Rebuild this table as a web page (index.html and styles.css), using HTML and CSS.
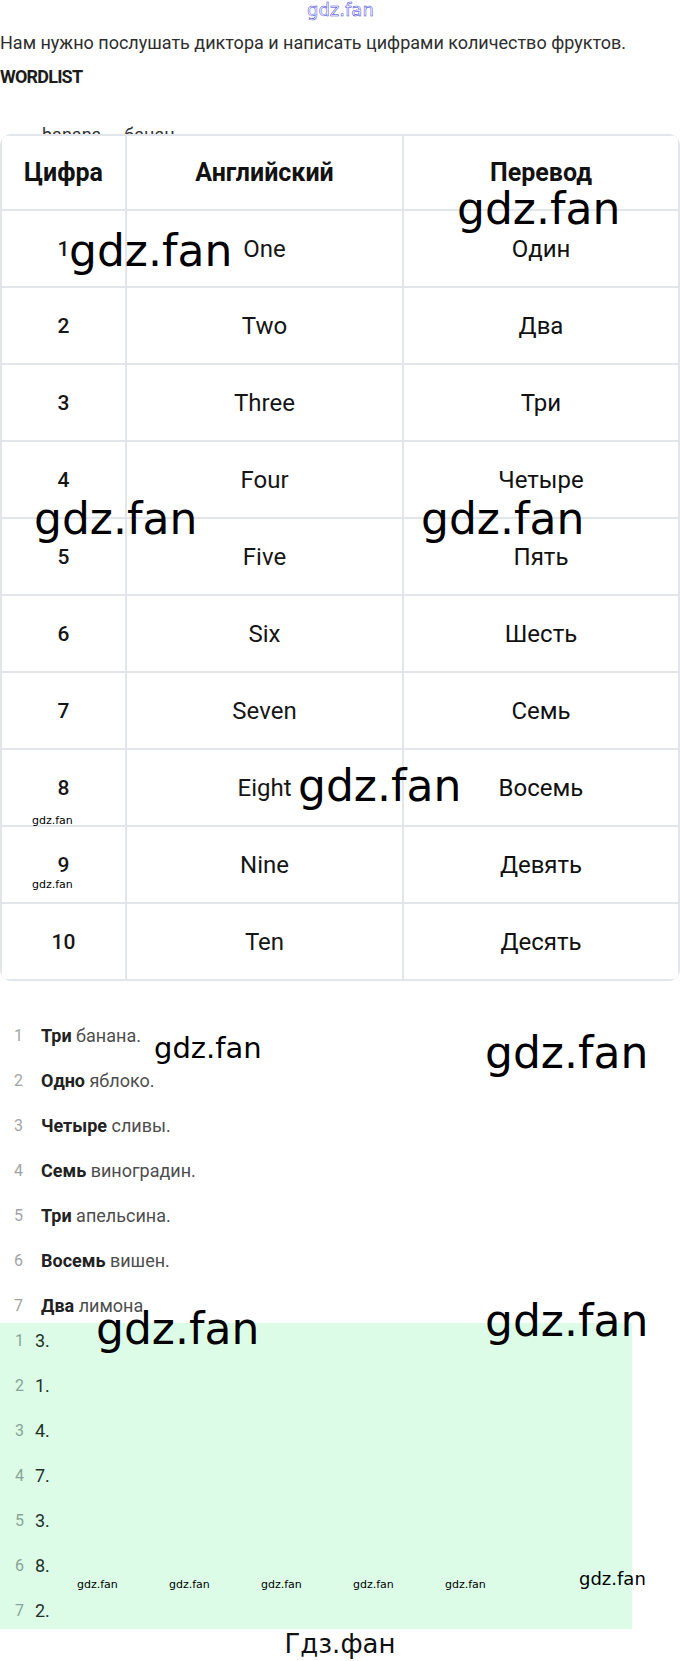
FILE: index.html
```html
<!DOCTYPE html>
<html lang="ru">
<head>
<meta charset="utf-8">
<title>WORDLIST</title>
<link rel="stylesheet" href="styles.css">
</head>
<body>
<div class="page">
  <p class="intro">Нам нужно послушать диктора и написать цифрами количество фруктов.</p>
  <h3 class="wordlist">WORDLIST</h3>
  <ul class="words"><li>banana — банан</li></ul>

  <div class="table">
    <div class="cell head">Цифра</div>
    <div class="cell head">Английский</div>
    <div class="cell head">Перевод</div>

    <div class="cell num">1</div><div class="cell en">One</div><div class="cell ru">Один</div>
    <div class="cell num">2</div><div class="cell en">Two</div><div class="cell ru">Два</div>
    <div class="cell num">3</div><div class="cell en">Three</div><div class="cell ru">Три</div>
    <div class="cell num">4</div><div class="cell en">Four</div><div class="cell ru">Четыре</div>
    <div class="cell num">5</div><div class="cell en">Five</div><div class="cell ru">Пять</div>
    <div class="cell num">6</div><div class="cell en">Six</div><div class="cell ru">Шесть</div>
    <div class="cell num">7</div><div class="cell en">Seven</div><div class="cell ru">Семь</div>
    <div class="cell num">8</div><div class="cell en">Eight</div><div class="cell ru">Восемь</div>
    <div class="cell num">9</div><div class="cell en">Nine</div><div class="cell ru">Девять</div>
    <div class="cell num">10</div><div class="cell en">Ten</div><div class="cell ru">Десять</div>
  </div>

  <ol class="sentences">
    <li><span class="n">1</span><span class="t"><b>Три</b> банана.</span></li>
    <li><span class="n">2</span><span class="t"><b>Одно</b> яблоко.</span></li>
    <li><span class="n">3</span><span class="t"><b>Четыре</b> сливы.</span></li>
    <li><span class="n">4</span><span class="t"><b>Семь</b> виноградин.</span></li>
    <li><span class="n">5</span><span class="t"><b>Три</b> апельсина.</span></li>
    <li><span class="n">6</span><span class="t"><b>Восемь</b> вишен.</span></li>
    <li><span class="n">7</span><span class="t"><b>Два</b> лимона.</span></li>
  </ol>

  <ol class="answers">
    <li><span class="n">1</span><span class="t">3.</span></li>
    <li><span class="n">2</span><span class="t">1.</span></li>
    <li><span class="n">3</span><span class="t">4.</span></li>
    <li><span class="n">4</span><span class="t">7.</span></li>
    <li><span class="n">5</span><span class="t">3.</span></li>
    <li><span class="n">6</span><span class="t">8.</span></li>
    <li><span class="n">7</span><span class="t">2.</span></li>
  </ol>

  <div class="footer-mark">Гдз.фан</div>

  <div class="wm wm-top">gdz.fan</div>
  <div class="wm big w1">gdz.fan</div>
  <div class="wm big w2">gdz.fan</div>
  <div class="wm big w3">gdz.fan</div>
  <div class="wm big w4">gdz.fan</div>
  <div class="wm big w5">gdz.fan</div>
  <div class="wm small s1">gdz.fan</div>
  <div class="wm small s2">gdz.fan</div>
  <div class="wm mid m1">gdz.fan</div>
  <div class="wm big w6">gdz.fan</div>
  <div class="wm big w7">gdz.fan</div>
  <div class="wm big w8">gdz.fan</div>
  <div class="wm small s3">gdz.fan</div>
  <div class="wm small s4">gdz.fan</div>
  <div class="wm small s5">gdz.fan</div>
  <div class="wm small s6">gdz.fan</div>
  <div class="wm small s7">gdz.fan</div>
  <div class="wm mid18 m2">gdz.fan</div>
</div>
</body>
</html>
```

FILE: styles.css
```css
* { box-sizing: border-box; }

html, body {
  margin: 0;
  padding: 0;
  background: #ffffff;
}

body {
  font-family: Roboto, "Noto Sans", sans-serif;
  color: #222;
}

.page {
  position: relative;
  width: 680px;
  padding-top: 30px;
}

.intro {
  margin: 0;
  font-size: 18px;
  line-height: 26px;
  color: #2e2e2e;
}

.wordlist {
  margin: 8px 0 0;
  font-size: 18px;
  line-height: 26px;
  font-weight: 700;
  letter-spacing: -0.8px;
  color: #1c1c1c;
}

.words {
  list-style: none;
  margin: 32px 0 0;
  padding: 0 0 0 42px;
  font-size: 18px;
  line-height: 26px;
  color: #333;
}

.table {
  position: relative;
  margin-top: -14px;
  display: grid;
  grid-template-columns: 123px 275px 1fr;
  grid-template-rows: 73px repeat(10, 75px);
  gap: 2px;
  padding: 2px;
  background: #e2e5e9;
  border-radius: 12px;
  overflow: hidden;
  box-shadow: 0 0 2px rgba(0, 0, 0, 0.06);
}

.cell {
  background: #fff;
  display: flex;
  align-items: center;
  justify-content: center;
  color: #161616;
  font-size: 24px;
}

.cell.head {
  font-size: 25px;
  font-weight: 700;
  color: #121212;
}

.cell.num { font-weight: 500; font-size: 21px; }
.cell.en { font-weight: 400; }
.cell.ru { font-weight: 400; color: #111; }

.sentences, .answers {
  list-style: none;
  margin: 0;
  padding: 0;
  display: flex;
  flex-direction: column;
  gap: 19px;
  font-size: 18px;
  line-height: 26px;
}

.sentences { margin-top: 42px; }

.sentences li {
  display: grid;
  grid-template-columns: 41px 1fr;
}

.sentences .n {
  text-align: right;
  padding-right: 18px;
  color: #a3a3a3;
  font-size: 16px;
}

.sentences .t { color: #4d4d4d; }
.sentences .t b { color: #222; font-weight: 700; }

.answers {
  margin-top: 4px;
  width: 632px;
  padding: 5px 0;
  background: #dcfce8;
}

.answers li {
  display: grid;
  grid-template-columns: 35px 1fr;
}

.answers .n {
  text-align: right;
  padding-right: 11px;
  color: #87a596;
  font-size: 16px;
}

.answers .t { color: #1e3328; }

.footer-mark {
  font-family: "DejaVu Sans", sans-serif;
  font-size: 26px;
  line-height: 30px;
  padding-bottom: 3px;
  text-align: center;
  color: #111;
}

.wm {
  position: absolute;
  font-family: "DejaVu Sans", sans-serif;
  line-height: 1;
  color: #000;
  white-space: nowrap;
}

.wm-top {
  top: 1px;
  left: 307px;
  font-size: 18px;
  color: rgba(255, 255, 255, 0);
  -webkit-text-stroke: 0.5px #3c3cd8;
}

.big { font-size: 44px; }
.mid { font-size: 29px; }
.mid18 { font-size: 18px; }
.small { font-size: 11px; }

.w1 { top: 187px; left: 457px; }
.w2 { top: 229px; left: 69px; }
.w3 { top: 497px; left: 34px; }
.w4 { top: 497px; left: 421px; }
.w5 { top: 764px; left: 298px; }
.w6 { top: 1031px; left: 485px; }
.w7 { top: 1307px; left: 96px; }
.w8 { top: 1299px; left: 485px; }

.m1 { top: 1034px; left: 154px; }
.m2 { top: 1570px; left: 579px; }

.s1 { top: 815px; left: 32px; }
.s2 { top: 879px; left: 32px; }
.s3 { top: 1579px; left: 77px; }
.s4 { top: 1579px; left: 169px; }
.s5 { top: 1579px; left: 261px; }
.s6 { top: 1579px; left: 353px; }
.s7 { top: 1579px; left: 445px; }
```
